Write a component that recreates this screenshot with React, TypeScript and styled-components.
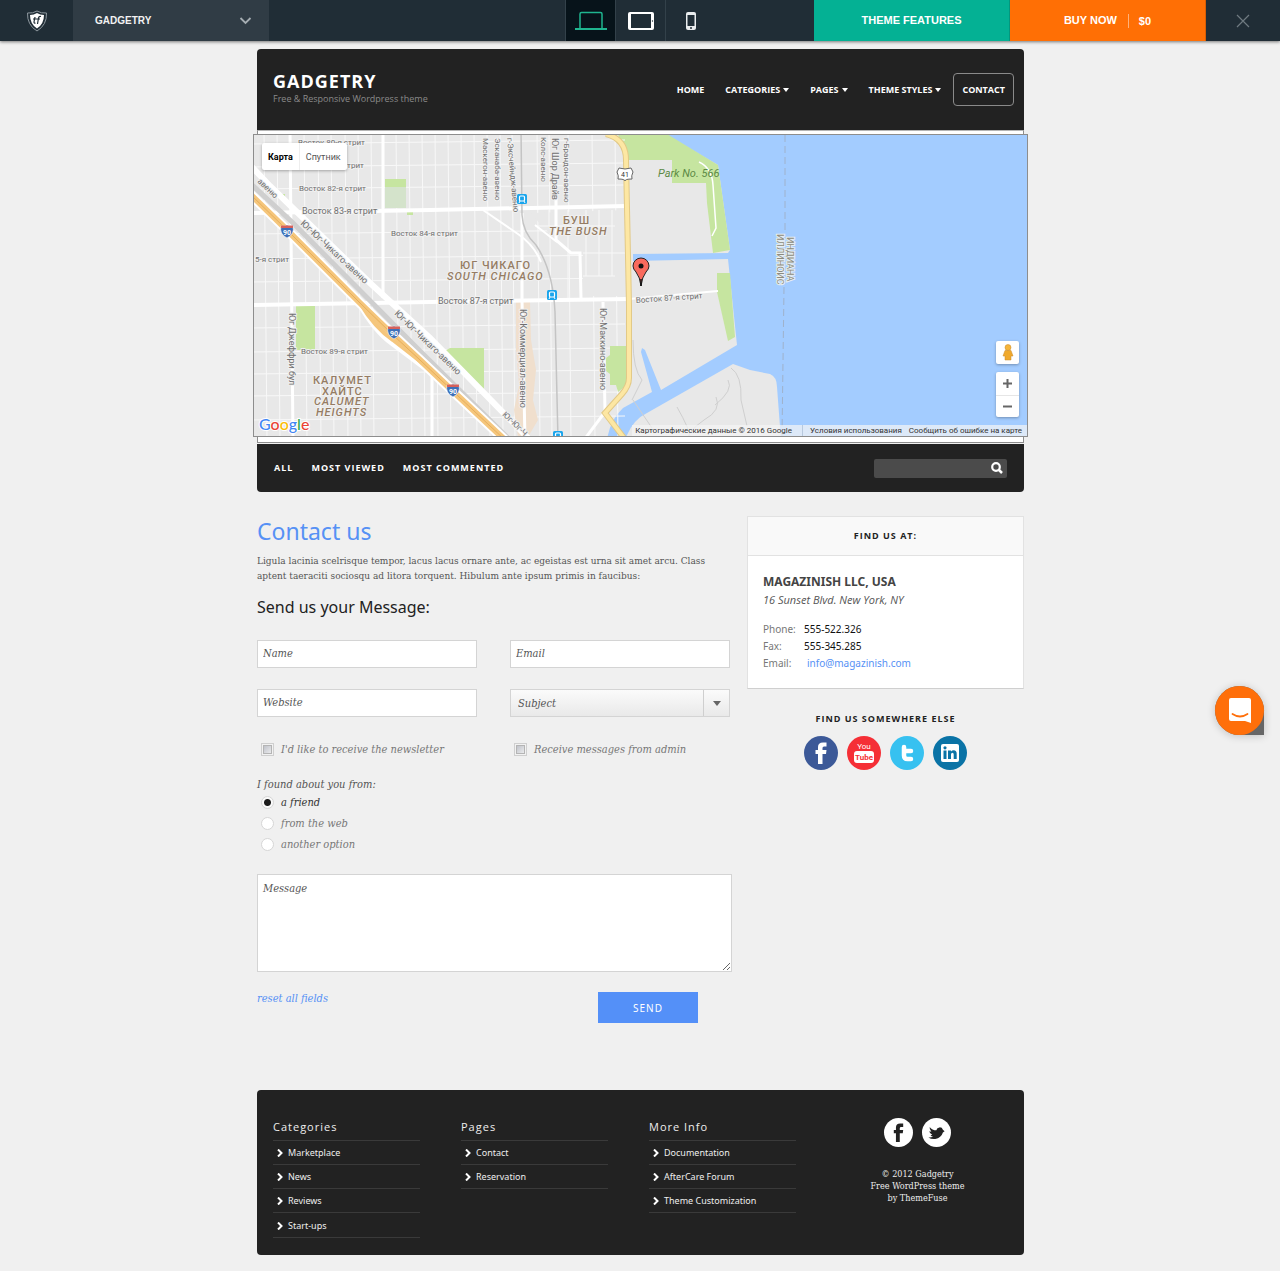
import React from "react";
import styled, { createGlobalStyle, css } from "styled-components";

const sans = `"Noto Sans", "Open Sans", sans-serif`;
const openSans = `"Open Sans", "Noto Sans", sans-serif`;
const serif = `"DejaVu Serif Condensed", "DejaVu Serif", serif`;
const arial = `"Liberation Sans", Arial, sans-serif`;

const Global = createGlobalStyle`
  *, *::before, *::after { box-sizing: border-box; }
  body { margin: 0; background: #f0f0f0; color: #555; font-family: ${sans}; }
  h1, h2, h3, p, ul, fieldset, address { margin: 0; padding: 0; border: 0; }
  ul { list-style: none; }
  a { color: inherit; text-decoration: none; }
  button { border: 0; padding: 0; cursor: pointer; }
`;

/* ---------- preview bar ---------- */
const TopBar = styled.header`
  display: flex;
  height: 41px;
  background: #202d36;
  box-shadow: 0 1px 3px rgba(0, 0, 0, 0.5);
  font: bold 11px/41px ${arial};
  color: #fff;
`;
const Brand = styled.a`
  display: flex;
  width: 73px;
  align-items: center;
  justify-content: center;
`;
const ThemePicker = styled.button`
  display: flex;
  width: 196px;
  padding: 0 17px 0 22px;
  align-items: center;
  justify-content: space-between;
  background: #303c45;
  color: #f2f2f2;
  font: bold 10px ${arial};
`;
const Devices = styled.div`
  display: flex;
  margin-left: auto;
  margin-right: 99px;
`;
const Device = styled.button<{ $active?: boolean }>`
  display: flex;
  width: 50px;
  align-items: center;
  justify-content: center;
  background: ${(p) => (p.$active ? "#07131a" : "transparent")};
  border-left: 1px solid #33414a;
`;
const Cta = styled.a<{ $tone: string }>`
  display: flex;
  width: 196px;
  align-items: center;
  justify-content: center;
  background: ${(p) => p.$tone};
  border-right: 1px solid rgba(0, 0, 0, 0.15);
`;
const Price = styled.span`
  margin-left: 11px;
  padding-left: 10px;
  border-left: 1px solid #ffb27a;
  line-height: 14px;
`;
const CloseButton = styled.button`
  display: flex;
  width: 74px;
  align-items: center;
  justify-content: center;
  background: transparent;
`;

/* ---------- page frame ---------- */
const Page = styled.div`
  max-width: 768px;
  margin: 8px auto 0;
  padding: 0 0 16px 1px;
`;
const Masthead = styled.div`
  display: flex;
  height: 81px;
  padding: 0 10px 0 16px;
  align-items: center;
  justify-content: space-between;
  background: #222;
  border-radius: 4px 4px 0 0;
`;
const SiteName = styled.div`
  padding-bottom: 4px;
`;
const SiteTitle = styled.h1`
  font: bold 18px/22px ${openSans};
  letter-spacing: 1px;
  color: #fff;
`;
const Tagline = styled.p`
  font: 9px/14px ${openSans};
  color: #8a8a8a;
`;
const MainNav = styled.nav`
  display: flex;
  align-items: center;
  gap: 3px;
  font: bold 9px/31px ${openSans};
  color: #fff;
`;
const NavLink = styled.a<{ $current?: boolean }>`
  display: flex;
  align-items: center;
  gap: 3px;
  padding: 0 8px;
  border: 1px solid ${(p) => (p.$current ? "#8a8a8a" : "transparent")};
  border-radius: 4px;
`;
const Caret = styled.span`
  border: 3px solid transparent;
  border-top: 4px solid currentColor;
  border-bottom: 0;
`;
const MapFrame = styled.section`
  padding: 3px 0 5px;
  background: #fff;
  border: 1px solid #8d8d8d;
  border-top-color: #b5b5b5;
  margin-bottom: 1px;
`;
const MapBox = styled.div`
  position: relative;
  height: 303px;
  margin: 0 -5px;
  border: 1px solid #8d8d8d;
  overflow: hidden;
  background: #a3ccff;
  font-family: Roboto, sans-serif;
`;
const MapDrawing = styled.svg`
  display: block;
  width: 100%;
  height: 100%;
`;
const MapTypes = styled.div`
  position: absolute;
  left: 8px;
  top: 8px;
  display: flex;
  background: #fff;
  border-radius: 2px;
  box-shadow: 0 1px 3px rgba(0, 0, 0, 0.3);
`;
const MapType = styled.button<{ $on?: boolean }>`
  height: 27px;
  padding: 0 6px;
  background: transparent;
  font: ${(p) => (p.$on ? 700 : 400)} 9px Roboto, sans-serif;
  color: ${(p) => (p.$on ? "#000" : "#555")};
  & + & { border-left: 1px solid #eee; }
`;
const MapControls = styled.div`
  position: absolute;
  right: 8px;
  bottom: 19px;
  display: flex;
  flex-direction: column;
  gap: 8px;
`;
const ControlStack = styled.div`
  display: flex;
  flex-direction: column;
  width: 23px;
  background: #fff;
  border-radius: 2px;
  box-shadow: 0 1px 3px rgba(0, 0, 0, 0.3);
`;
const MapControl = styled.button`
  display: flex;
  height: 23px;
  align-items: center;
  justify-content: center;
  background: transparent;
  & + & { border-top: 1px solid #e6e6e6; height: 22px; }
`;
const MapCredits = styled.div`
  position: absolute;
  right: 0;
  bottom: 0;
  display: flex;
  gap: 7px;
  height: 11px;
  padding: 0 5px 0 3px;
  background: rgba(245, 245, 245, 0.7);
  font: 8px/11px Roboto, sans-serif;
  color: #333;
  span {
    padding-right: 10px;
    border-right: 1px solid rgba(160, 180, 205, 0.6);
  }
`;
const FilterBar = styled.div`
  display: flex;
  height: 48px;
  padding: 0 17px;
  align-items: center;
  justify-content: space-between;
  background: #222;
  border-radius: 0 0 4px 4px;
`;
const Filters = styled.nav`
  display: flex;
  gap: 18px;
  font: bold 9px/14px ${openSans};
  letter-spacing: 1px;
  color: #fff;
`;
const SearchForm = styled.form`
  display: flex;
  width: 133px;
  height: 19px;
  background: #4b4b4b;
  border-radius: 2px;
`;
const SearchInput = styled.input`
  flex: 1;
  min-width: 0;
  padding: 0 6px;
  border: 0;
  background: transparent;
  color: #fff;
  font: 9px ${sans};
`;
const SearchButton = styled.button`
  display: flex;
  width: 20px;
  align-items: center;
  justify-content: center;
  background: transparent;
`;

/* ---------- content ---------- */
const Columns = styled.div`
  display: grid;
  grid-template-columns: minmax(0, 1fr) 277px;
  gap: 15px;
  padding-top: 24px;
`;
const Heading = styled.h2`
  font: 400 23px/30px ${sans};
  color: #5691f5;
`;
const Lead = styled.p`
  padding-top: 7px;
  font: 10px/15px ${serif};
  color: #555;
`;
const SubHeading = styled.h3`
  padding: 12px 0 21px;
  font: 400 16px/24px ${sans};
  color: #222;
`;
const italicText = css`
  font: italic 11px/21px ${serif};
  color: #555;
`;
const Fields = styled.div`
  display: grid;
  grid-template-columns: 1fr 1fr;
  gap: 21px 33px;
  padding-right: 2px;
`;
const fieldBox = css`
  width: 100%;
  border: 1px solid #d4d4d4;
  border-radius: 0;
  background: #fff;
  outline: 0;
  ${italicText}
  &::placeholder { color: #555; opacity: 1; }
`;
const TextField = styled.input`
  ${fieldBox}
  height: 28px;
  padding: 0 5px 2px;
`;
const SelectWrap = styled.div`
  position: relative;
  &::after {
    content: "";
    position: absolute;
    top: 12px;
    right: 9px;
    border: 4px solid transparent;
    border-top: 5px solid #666;
    border-bottom: 0;
    pointer-events: none;
  }
`;
const SelectField = styled.select`
  ${fieldBox}
  height: 28px;
  padding: 0 32px 0 7px;
  appearance: none;
  background:
    linear-gradient(#cfcfcf, #cfcfcf) right 25px top / 1px 100% no-repeat,
    linear-gradient(#fbfbfb, #e9e9e9);
`;
const Choice = styled.label<{ $picked?: boolean }>`
  display: flex;
  align-items: center;
  gap: 7px;
  padding-left: 4px;
  ${italicText}
  color: ${(p) => (p.$picked ? "#333" : "#777")};
`;
const Tick = styled.input`
  width: 13px;
  height: 13px;
  margin: 0;
  appearance: none;
  border: 1px solid #cfcfcf;
  background: linear-gradient(135deg, #b4b7c0, #f6f6f6);
  box-shadow: inset 0 0 0 1px #f2f2f2, inset 0 0 0 2px #b4b4b4;
  &:checked { background: #444; }
`;
const Radio = styled.input`
  width: 13px;
  height: 13px;
  margin: 0;
  appearance: none;
  border: 1px solid #d6d6d6;
  border-radius: 50%;
  background: #fff;
  &:checked { background: radial-gradient(circle, #1c1c1c 0 3px, #fafafa 4px); }
`;
const Ticks = styled(Fields)`
  padding-top: 22px;
`;
const Sources = styled.fieldset`
  padding-top: 18px;
  legend {
    float: left;
    width: 100%;
    padding: 0;
    ${italicText}
    line-height: 14px;
  }
`;
const MessageField = styled.textarea`
  ${fieldBox}
  display: block;
  height: 98px;
  margin-top: 19px;
  padding: 3px 5px;
`;
const FormActions = styled.div`
  display: flex;
  align-items: flex-start;
  justify-content: space-between;
  padding: 20px 34px 67px 0;
`;
const ResetLink = styled.button`
  background: transparent;
  ${italicText}
  line-height: 14px;
  color: #5691f5;
`;
const SendButton = styled.button`
  width: 100px;
  height: 31px;
  background: #5490f8;
  color: #fff;
  font: 10px ${sans};
  letter-spacing: 1px;
`;
const Card = styled.section`
  background: #fff;
  border: 1px solid #e2e2e2;
  border-bottom-color: #cfcfcf;
`;
const cardCaption = css`
  font: bold 9px/14px ${openSans};
  letter-spacing: 1px;
  text-align: center;
  color: #222;
`;
const CardTitle = styled.h3`
  ${cardCaption}
  padding: 12px 0;
  background: #f9f9f9;
  border-bottom: 1px solid #e2e2e2;
`;
const CardBody = styled.address`
  padding: 17px 15px 16px;
  font-style: normal;
`;
const Company = styled.p`
  font: bold 12px/18px ${sans};
  color: #444;
`;
const Street = styled.p`
  font: italic 11px/18px ${openSans};
  color: #555;
`;
const Details = styled.dl`
  display: grid;
  grid-template-columns: 41px 1fr;
  margin: 12px 0 0;
  font: 10px/17px ${sans};
  dt { color: #777; }
  dd { margin: 0; color: #111; }
  a { padding-left: 3px; color: #5691f5; }
`;
const SocialTitle = styled.h3`
  ${cardCaption}
  padding-top: 23px;
`;
const SocialRow = styled.div`
  display: flex;
  justify-content: center;
  gap: 9px;
  a, svg { display: block; }
`;
const SocialBlock = styled.section`
  display: grid;
  gap: 10px;
`;

/* ---------- footer ---------- */
const Footer = styled.footer`
  display: grid;
  grid-template-columns: repeat(3, 147fr) 161fr;
  gap: 41px;
  padding: 27px 26px 17px 16px;
  background: #222;
  border-radius: 4px;
  color: #eee;
`;
const FooterTitle = styled.h3`
  padding-bottom: 4px;
  font: 400 11px/19px ${openSans};
  letter-spacing: 1px;
  border-bottom: 1px solid #3a3a3a;
`;
const FooterLink = styled.a`
  display: flex;
  align-items: center;
  gap: 5px;
  height: 24px;
  padding-left: 4px;
  font: 9px/23px ${sans};
  border-bottom: 1px solid #3a3a3a;
`;
const FooterItem = styled.li`
  &:nth-child(3n) { padding-bottom: 1px; }
`;
const FooterAbout = styled.section`
  padding-top: 1px;
`;
const Copyright = styled.p`
  padding-top: 21px;
  font: 9px/12px ${serif};
  text-align: center;
`;
const ChatButton = styled.button`
  position: fixed;
  right: 16px;
  top: 686px;
  width: 49px;
  height: 49px;
  border-radius: 50% 50% 0 50%;
  background: #666;
  box-shadow: 0 1px 8px rgba(0, 0, 0, 0.2);
`;
const ChatFace = styled.span`
  display: flex;
  width: 49px;
  height: 49px;
  align-items: center;
  justify-content: center;
  border-radius: 50%;
  background: #ff6f0a;
`;

/* ---------- map drawing ---------- */
const columnsX = [264, 277, 304, 318, 331, 345, 358, 371, 396, 409, 422, 435, 448, 461, 474, 487, 500, 512, 537, 549, 568, 592, 615];
const rowsY = [143, 166, 188, 233, 258, 281, 327, 351, 373, 395, 419];

type Label = { t: string; x: number; y: number; r?: number; s?: number; k?: "area" | "areaEn" };
const labels: Label[] = [
  { t: "Восток 80-я стрит", x: 298, y: 145 },
  { t: "Восток 81-я стрит", x: 297, y: 168 },
  { t: "Восток 82-я стрит", x: 299, y: 191 },
  { t: "Восток 83-я стрит", x: 302, y: 214, s: 9 },
  { t: "Восток 84-я стрит", x: 391, y: 236 },
  { t: "5-я стрит", x: 255, y: 262 },
  { t: "Восток 87-я стрит", x: 438, y: 304, s: 9 },
  { t: "Восток 89-я стрит", x: 301, y: 354 },
  { t: "Восток 87-я стрит", x: 636, y: 303, r: -4 },
  { t: "авеню", x: 257, y: 182, r: 43 },
  { t: "Юг-Юг-Чикаго-авеню", x: 300, y: 224, r: 43, s: 9 },
  { t: "Юг-Юг-Чикаго-авеню", x: 394, y: 314, r: 44, s: 9 },
  { t: "Юг-Юг-Ч", x: 502, y: 415, r: 44 },
  { t: "Юг Джеффри бул", x: 289, y: 313, r: 90, s: 9 },
  { t: "Маскегон-авеню", x: 483, y: 138, r: 90 },
  { t: "Эсканаба-авеню", x: 495, y: 138, r: 90 },
  { t: "г-Эксчейндж-авеню", x: 507, y: 138, r: 85 },
  { t: "Колс-авеню", x: 541, y: 137, r: 90 },
  { t: "Юг Шор Драйв", x: 552, y: 138, r: 90, s: 9 },
  { t: "г-Брандон-авеню", x: 564, y: 138, r: 90 },
  { t: "Юг-Коммерциал-авеню", x: 520, y: 309, r: 90, s: 9 },
  { t: "Юг-Маккино-авеню", x: 600, y: 308, r: 90, s: 9 },
  { t: "БУШ", x: 563, y: 224, k: "area" },
  { t: "THE BUSH", x: 549, y: 235, k: "areaEn" },
  { t: "ЮГ ЧИКАГО", x: 460, y: 269, k: "area" },
  { t: "SOUTH CHICAGO", x: 447, y: 280, k: "areaEn" },
  { t: "КАЛУМЕТ", x: 313, y: 384, k: "area" },
  { t: "ХАЙТС", x: 322, y: 395, k: "area" },
  { t: "CALUMET", x: 314, y: 405, k: "areaEn" },
  { t: "HEIGHTS", x: 316, y: 416, k: "areaEn" },
];
const MapLabel = styled.text<{ $area?: boolean; $italic?: boolean }>`
  font-family: Roboto, sans-serif;
  font-style: ${(p) => (p.$italic ? "italic" : "normal")};
  font-weight: ${(p) => (p.$area ? 500 : 400)};
  letter-spacing: ${(p) => (p.$area ? "1px" : "0")};
  fill: ${(p) => (p.$area ? "#957c63" : "#6f6f6f")};
  stroke: #f0f0f0;
  stroke-width: 2px;
  stroke-linejoin: round;
  paint-order: stroke;
`;

const Shield = ({ x, y }: { x: number; y: number }) => (
  <g transform={`translate(${x} ${y})`}>
    <path d="M-6-5Q-3-4 0-6Q3-4 6-5Q8 3 0 7Q-8 3-6-5Z" fill="#3d6fb8" stroke="#fff" strokeWidth="0.6" />
    <path d="M-6-5.500H6V-3H-6Z" fill="#d6605a" />
    <text y="4" textAnchor="middle" fontSize="7" fontWeight="700" fill="#fff">90</text>
  </g>
);
const Station = ({ x, y }: { x: number; y: number }) => (
  <g transform={`translate(${x} ${y})`}>
    <rect x="-5" y="-5" width="10" height="10" rx="1.500" fill="#1aa5ec" />
    <rect x="-2.500" y="-3" width="5" height="5" rx="1" fill="none" stroke="#fff" strokeWidth="1.200" />
    <path d="M-3 4L-2 2M3 4L2 2" stroke="#fff" />
  </g>
);

const road41 = "M606 134Q626 139 626 160L629 305V378Q629 386 622 394L605 413L624 438";
const highway = "M250 194L287 230L360 303L393 335L420 360L457 395L505 440";
const frontage = "M250 165L270 186L300 215L370 283L430 338L530 440";

const CityMap = () => (
  <MapDrawing viewBox="254 135 773 301" preserveAspectRatio="xMidYMid slice" role="img" aria-label="Карта">
    <rect x="0" y="0" width="1300" height="600" fill="#a3ccff" />
    <path d="M200 100H610L667 135L718 165L730 250L728 253L633 254V261L728 259L737 345L661 390L645 350L642 348L641 352L652 392L623 408Q610 420 607 440H200Z" fill="#e8e8e8" />
    <path d="M625 440Q632 420 647 413L733 364L750 370L770 374Q777 377 777 387L781 440Z" fill="#e8e8e8" />
    <path d="M618 134H667L718 165L730 250L713 253L707 203L706 183H672V160H626Z" fill="#c6e5a0" />
    <path d="M717 273H730L735 337L728 341L717 292Z" fill="#c6e5a0" />
    <g fill="none" stroke="#f8f8f8" strokeWidth="1">
      {columnsX.map((x) => <path key={x} d={`M${x} 130L${x + 3} 440`} />)}
      {rowsY.map((y) => <path key={y} d={`M250 ${y + 1}L625 ${y - 3}`} />)}
    </g>
    <path d="M610 346H628V384L618 392L616 385H610V374L606 371V358L610 355Z" fill="#c6e5a0" />
    <path d="M531 213L628 210V296H583V254H572L541 225Z" fill="#e8e8e8" />
    <path d="M535 226H615M549 210V226M568 210V298M586 210V276M599 210V276M612 210V276M583 253H626M583 276H615" stroke="#f8f8f8" fill="none" />
    <path d="M516 302L530 302L531 340L536 370L533 400L538 420L528 437H518L514 410L519 385L516 350Z" fill="#f0dfcd" />
    <rect x="385" y="179" width="21" height="8" fill="#c6e5a0" />
    <rect x="385" y="187" width="21" height="21" fill="#d4e3cb" />
    <rect x="407" y="211" width="6" height="4" fill="#c6e5a0" />
    <rect x="280" y="194" width="5" height="6" fill="#c6e5a0" />
    <path d="M296 306H315V350H296Z" fill="#c6e5a0" />
    <path d="M443 352L450 348H484V392L470 382Z" fill="#c6e5a0" />
    <g fill="none" stroke="#fff" strokeWidth="3">
      <path d="M250 213L430 210L626 206" strokeWidth="4" />
      <path d="M250 305L430 302L629 299" strokeWidth="4" />
      <path d="M629 299L718 291" strokeWidth="2" />
      <path d="M290 130L293 440M383 130V298M432 370V440" />
      <path d="M522 213V300L525 440M603 302L605 412L584 440" />
      <path d="M556 198V240L571 253H580L581 298" />
      <path d="M483 210L518 234Q534 245 541 262" strokeWidth="2" />
      <path d="M535 225L557 242" strokeWidth="2" />
      <path d="M699 162Q712 168 713 185L716 228L712 236" strokeWidth="1.500" />
    </g>
    <path d="M521 130L522 215Q523 233 536 245Q553 270 555 312L558 440" fill="none" stroke="#c4c4c4" strokeWidth="1.500" />
    <g fill="none" stroke="#cfcfcf">
      <path d="M633 340Q633 370 642 380L632 400M633 400L652 428M677 407Q690 430 690 437M716 397Q722 410 704 420Q690 430 688 437M731 368Q742 375 741 400L747 426M728 380Q734 390 715 405" />
    </g>
    <path d="M250 183L292 222L420 351L510 440" fill="none" stroke="#cfcfcf" strokeWidth="5" />
    <path d={frontage} fill="none" stroke="#fff" strokeWidth="6" />
    <path d={highway} fill="none" stroke="#fff" strokeWidth="10" />
    <path d="M360 303Q375 330 393 343L425 367" fill="none" stroke="#fff" strokeWidth="7" />
    <path d={highway} fill="none" stroke="#f5c67c" strokeWidth="6" />
    <path d="M360 303Q375 328 393 340L425 365" fill="none" stroke="#f5c67c" strokeWidth="4" />
    <path d={highway} fill="none" stroke="#e3a850" strokeWidth="0.800" />
    <path d={road41} fill="none" stroke="#e2c987" strokeWidth="6" />
    <path d={road41} fill="none" stroke="#fde7a3" strokeWidth="4" />
    <path d="M785 135V230M784 287L782 436" stroke="#9fb2cc" strokeDasharray="7 4" fill="none" />
    {labels.map((l, i) => (
      <MapLabel
        key={i}
        $area={!!l.k}
        $italic={l.k === "areaEn"}
        fontSize={l.k ? 11 : l.s ?? 8}
        transform={`translate(${l.x} ${l.y}) rotate(${l.r ?? 0})`}
      >
        {l.t}
      </MapLabel>
    ))}
    <text x="658" y="177" fontSize="11" fontStyle="italic" fill="#5d8a45">Park No. 566</text>
    <g fontSize="9" fill="#8b8b80" stroke="#e8eef0" strokeWidth="2">
      <text transform="translate(787 237) rotate(90)" style={{ paintOrder: "stroke" }}>ИНДИАНА</text>
      <text transform="translate(777 234) rotate(90)" style={{ paintOrder: "stroke" }}>ИЛЛИНОИС</text>
    </g>
    <Shield x={287} y={231} />
    <Shield x={394} y={332} />
    <Shield x={453} y={390} />
    <Station x={522} y={199} />
    <Station x={552} y={295} />
    <Station x={558} y={436} />
    <path d="M619 168Q625 170 631 168L633 172Q631 176 632 179Q625 179 625 181Q625 179 618 179Q619 176 617 172Z" fill="#fff" stroke="#666" />
    <text x="625" y="177" fontSize="7" textAnchor="middle" fill="#333">41</text>
    <path d="M641 286Q640 277 636 272Q633 269 633 266A8 8 0 0 1 649 266Q649 269 646 272Q642 277 641 286Z" fill="#f96a5d" stroke="#222" />
    <path d="M641 279V286" stroke="#111" strokeWidth="1.500" />
    <circle cx="641" cy="266" r="2.500" fill="#111" />
    <text x="259" y="430" fontSize="16" fontWeight="500" fontFamily="Lato, sans-serif" stroke="#fff" strokeWidth="2" style={{ paintOrder: "stroke" }}>
      <tspan fill="#4285f4">G</tspan><tspan fill="#ea4335">o</tspan><tspan fill="#fbbc05">o</tspan>
      <tspan fill="#4285f4">g</tspan><tspan fill="#34a853">l</tspan><tspan fill="#ea4335">e</tspan>
    </text>
  </MapDrawing>
);

/* ---------- social marks ---------- */
const Facebook = ({ size, bg, fg }: { size: number; bg: string; fg: string }) => (
  <svg width={size} height={size} viewBox="0 0 34 34" aria-hidden="true">
    <circle cx="17" cy="17" r="17" fill={bg} />
    <path d="M14 28V18H11.500V14H14v-3Q14 6.500 19 6.500h3.500v4H20q-1.500 0-1.500 1.500v2h4l-.5 4h-3.500v10z" fill={fg} />
  </svg>
);
const YouTube = () => (
  <svg width="34" height="34" viewBox="0 0 34 34" aria-hidden="true">
    <circle cx="17" cy="17" r="17" fill="#f52f36" />
    <rect x="7" y="15" width="20" height="12" rx="3" fill="#fff" />
    <text x="17" y="13" textAnchor="middle" fontFamily="Roboto, sans-serif" fontSize="8" fill="#fff">You</text>
    <text x="17" y="24" textAnchor="middle" fontFamily="Roboto, sans-serif" fontSize="8" fontWeight="700" fill="#f52f36">Tube</text>
  </svg>
);
const TwitterT = () => (
  <svg width="34" height="34" viewBox="0 0 34 34" aria-hidden="true">
    <circle cx="17" cy="17" r="17" fill="#37c1f0" />
    <path d="M14 11V19.500Q14 23 17.500 23H21M14 15H21" fill="none" stroke="#fff" strokeWidth="4.500" strokeLinecap="round" strokeLinejoin="round" />
  </svg>
);
const LinkedIn = () => (
  <svg width="34" height="34" viewBox="0 0 34 34" aria-hidden="true">
    <circle cx="17" cy="17" r="17" fill="#0a73a6" />
    <rect x="8" y="8" width="18" height="18" rx="2" fill="#fff" />
    <path d="M10.500 14.500h3V23h-3zM15 14.500h3v1q1-1.300 2.700-1.300 3 0 3 3.600V23h-3v-4.600q0-1.700-1.200-1.700-1.500 0-1.500 1.800V23h-3z" fill="#0a73a6" />
    <circle cx="12" cy="11.800" r="1.600" fill="#0a73a6" />
  </svg>
);
const Bird = () => (
  <svg width="29" height="29" viewBox="0 0 34 34" aria-hidden="true">
    <circle cx="17" cy="17" r="17" fill="#fff" />
    <path d="M26.500 15.500L24.500 13.800Q23.500 10.800 20.500 11Q17.500 11.200 16.800 14.500Q12 14.500 9 10.500Q8.500 13.500 11 16Q9.500 16 8.500 15.500Q9 18.500 12 19.500Q11 20 10 19.800Q11 21.500 13 21.700Q11 23 7.500 22.800Q11 25 15.500 24.500Q22.500 23.500 24.500 17Z" fill="#222" />
  </svg>
);
const Chevron = () => (
  <svg width="6" height="8" viewBox="0 0 6 8" aria-hidden="true">
    <path d="M1 0.500L4.500 4L1 7.500" fill="none" stroke="#fff" strokeWidth="2" />
  </svg>
);

const mainLinks = [
  { label: "HOME" },
  { label: "CATEGORIES", menu: true },
  { label: "PAGES", menu: true },
  { label: "THEME STYLES", menu: true },
  { label: "CONTACT", current: true },
];
const footerColumns = [
  { title: "Categories", links: ["Marketplace", "News", "Reviews", "Start-ups"] },
  { title: "Pages", links: ["Contact", "Reservation"] },
  { title: "More Info", links: ["Documentation", "AfterCare Forum", "Theme Customization"] },
];
const sources = ["a friend", "from the web", "another option"];

export default function App() {
  const [source, setSource] = React.useState(sources[0]);
  return (
    <>
      <Global />
      <TopBar>
        <Brand href="#" aria-label="ThemeFuse">
          <svg width="22" height="22" viewBox="0 0 22 22" aria-hidden="true">
            <path d="M11 1Q15 3.500 20.500 3Q21 15 11 21Q1 15 1.500 3Q7 3.500 11 1Z" fill="none" stroke="#8d979e" />
            <path d="M11 3Q14 5 18 5Q18 14 11 18.500Q4 14 4 5Q8 5 11 3Z" fill="#fff" />
            <path d="M9 7L8 12Q8 13.500 9.500 13M7 9H14M15 6.500Q13 6 12.500 8L11.500 14" fill="none" stroke="#202d36" strokeWidth="1.200" />
          </svg>
        </Brand>
        <ThemePicker type="button">
          GADGETRY
          <svg width="13" height="8" viewBox="0 0 13 8" aria-hidden="true">
            <path d="M1.500 1L6.500 6L11.500 1" fill="none" stroke="#a5adb2" strokeWidth="1.800" />
          </svg>
        </ThemePicker>
        <Devices>
          <Device $active type="button" aria-label="Desktop">
            <svg width="32" height="20" viewBox="0 0 32 20" fill="none" stroke="#1fb58f" aria-hidden="true">
              <path d="M5 17V3Q5 1.500 6.500 1.500H25.500Q27 1.500 27 3V17" strokeWidth="1.500" />
              <path d="M0 18H32" strokeWidth="2" />
            </svg>
          </Device>
          <Device type="button" aria-label="Tablet">
            <svg width="26" height="18" viewBox="0 0 26 18" aria-hidden="true">
              <rect width="26" height="18" rx="2" fill="#fff" />
              <rect x="3" y="2" width="20" height="14" fill="#202d36" />
              <circle cx="24.500" cy="9" r="0.700" fill="#202d36" />
            </svg>
          </Device>
          <Device type="button" aria-label="Phone">
            <svg width="10" height="18" viewBox="0 0 10 18" aria-hidden="true">
              <rect width="10" height="18" rx="2" fill="#e9ecee" />
              <rect x="1.500" y="3" width="7" height="11" fill="#202d36" />
              <circle cx="5" cy="16" r="1" fill="#202d36" />
            </svg>
          </Device>
        </Devices>
        <Cta href="#" $tone="#04b194">THEME FEATURES</Cta>
        <Cta href="#" $tone="#ff6f05">BUY NOW<Price>$0</Price></Cta>
        <CloseButton type="button" aria-label="Close">
          <svg width="14" height="14" viewBox="0 0 14 14" aria-hidden="true">
            <path d="M1 1L13 13M13 1L1 13" stroke="#6f7a81" strokeWidth="1.200" />
          </svg>
        </CloseButton>
      </TopBar>

      <Page>
        <Masthead>
          <SiteName>
            <SiteTitle>GADGETRY</SiteTitle>
            <Tagline>Free &amp; Responsive Wordpress theme</Tagline>
          </SiteName>
          <MainNav>
            {mainLinks.map((l) => (
              <NavLink key={l.label} href="#" $current={l.current}>
                {l.label}
                {l.menu && <Caret />}
              </NavLink>
            ))}
          </MainNav>
        </Masthead>
        <MapFrame>
          <MapBox>
            <CityMap />
            <MapTypes>
              <MapType type="button" $on>Карта</MapType>
              <MapType type="button">Спутник</MapType>
            </MapTypes>
            <MapControls>
              <ControlStack>
                <MapControl type="button" aria-label="Street View">
                  <svg width="12" height="17" viewBox="0 0 12 17" aria-hidden="true">
                    <circle cx="6" cy="3.500" r="3" fill="#f5b53a" stroke="#c9892a" strokeWidth="0.500" />
                    <path d="M3 6.500H9L11 12H9V16H3V12H1Z" fill="#f0a92c" stroke="#c9892a" strokeWidth="0.500" />
                  </svg>
                </MapControl>
              </ControlStack>
              <ControlStack>
                <MapControl type="button" aria-label="Zoom in">
                  <svg width="9" height="9" aria-hidden="true"><path d="M0 4.500H9M4.500 0V9" stroke="#666" strokeWidth="2" /></svg>
                </MapControl>
                <MapControl type="button" aria-label="Zoom out">
                  <svg width="9" height="9" aria-hidden="true"><path d="M0 4.500H9" stroke="#666" strokeWidth="2" /></svg>
                </MapControl>
              </ControlStack>
            </MapControls>
            <MapCredits>
              <span>Картографические данные © 2016 Google</span>
              <a href="#">Условия использования</a>
              <a href="#">Сообщить об ошибке на карте</a>
            </MapCredits>
          </MapBox>
        </MapFrame>
        <FilterBar>
          <Filters>
            <a href="#">ALL</a>
            <a href="#">MOST VIEWED</a>
            <a href="#">MOST COMMENTED</a>
          </Filters>
          <SearchForm role="search">
            <SearchInput type="text" aria-label="Search" />
            <SearchButton type="button" aria-label="Search">
              <svg width="12" height="12" viewBox="0 0 12 12" aria-hidden="true">
                <circle cx="5" cy="5" r="3.800" fill="none" stroke="#fff" strokeWidth="2.200" />
                <path d="M8 8L11 11" stroke="#fff" strokeWidth="2.500" />
              </svg>
            </SearchButton>
          </SearchForm>
        </FilterBar>

        <Columns>
          <main>
            <Heading>Contact us</Heading>
            <Lead>
              Ligula lacinia scelrisque tempor, lacus lacus ornare ante, ac egeistas est urna sit amet arcu. Class
              aptent taeraciti sociosqu ad litora torquent. Hibulum ante ipsum primis in faucibus:
            </Lead>
            <SubHeading>Send us your Message:</SubHeading>
            <form>
              <Fields>
                <TextField type="text" placeholder="Name" aria-label="Name" />
                <TextField type="email" placeholder="Email" aria-label="Email" />
                <TextField type="text" placeholder="Website" aria-label="Website" />
                <SelectWrap>
                  <SelectField aria-label="Subject">
                    <option>Subject</option>
                  </SelectField>
                </SelectWrap>
              </Fields>
              <Ticks>
                <Choice><Tick type="checkbox" />I'd like to receive the newsletter</Choice>
                <Choice><Tick type="checkbox" />Receive messages from admin</Choice>
              </Ticks>
              <Sources>
                <legend>I found about you from:</legend>
                {sources.map((s) => (
                  <Choice key={s} $picked={s === source}>
                    <Radio type="radio" name="source" checked={s === source} onChange={() => setSource(s)} />
                    {s}
                  </Choice>
                ))}
              </Sources>
              <MessageField placeholder="Message" aria-label="Message" />
              <FormActions>
                <ResetLink type="reset">reset all fields</ResetLink>
                <SendButton type="button">SEND</SendButton>
              </FormActions>
            </form>
          </main>
          <aside>
            <Card>
              <CardTitle>FIND US AT:</CardTitle>
              <CardBody>
                <Company>MAGAZINISH LLC, USA</Company>
                <Street>16 Sunset Blvd. New York, NY</Street>
                <Details>
                  <dt>Phone:</dt><dd>555-522.326</dd>
                  <dt>Fax:</dt><dd>555-345.285</dd>
                  <dt>Email:</dt><dd><a href="#">info@magazinish.com</a></dd>
                </Details>
              </CardBody>
            </Card>
            <SocialBlock>
              <SocialTitle>FIND US SOMEWHERE ELSE</SocialTitle>
              <SocialRow>
                <a href="#" aria-label="Facebook"><Facebook size={34} bg="#3c5998" fg="#fff" /></a>
                <a href="#" aria-label="YouTube"><YouTube /></a>
                <a href="#" aria-label="Twitter"><TwitterT /></a>
                <a href="#" aria-label="LinkedIn"><LinkedIn /></a>
              </SocialRow>
            </SocialBlock>
          </aside>
        </Columns>

        <Footer>
          {footerColumns.map((c) => (
            <section key={c.title}>
              <FooterTitle>{c.title}</FooterTitle>
              <ul>
                {c.links.map((l) => (
                  <FooterItem key={l}>
                    <FooterLink href="#"><Chevron />{l}</FooterLink>
                  </FooterItem>
                ))}
              </ul>
            </section>
          ))}
          <FooterAbout>
            <SocialRow>
              <a href="#" aria-label="Facebook"><Facebook size={29} bg="#fff" fg="#222" /></a>
              <a href="#" aria-label="Twitter"><Bird /></a>
            </SocialRow>
            <Copyright>
              © 2012 Gadgetry<br />Free WordPress theme<br />by ThemeFuse
            </Copyright>
          </FooterAbout>
        </Footer>
      </Page>

      <ChatButton type="button" aria-label="Open chat">
        <ChatFace>
          <svg width="24" height="27" viewBox="0 0 24 27" aria-hidden="true">
            <path d="M3 1H21Q23 1 23 3V26L17 24H3Q1 24 1 22V3Q1 1 3 1Z" fill="#fff" />
            <path d="M4.500 17Q12 22 19.500 17" fill="none" stroke="#ff6f0a" strokeWidth="1.800" strokeLinecap="round" />
          </svg>
        </ChatFace>
      </ChatButton>
    </>
  );
}
